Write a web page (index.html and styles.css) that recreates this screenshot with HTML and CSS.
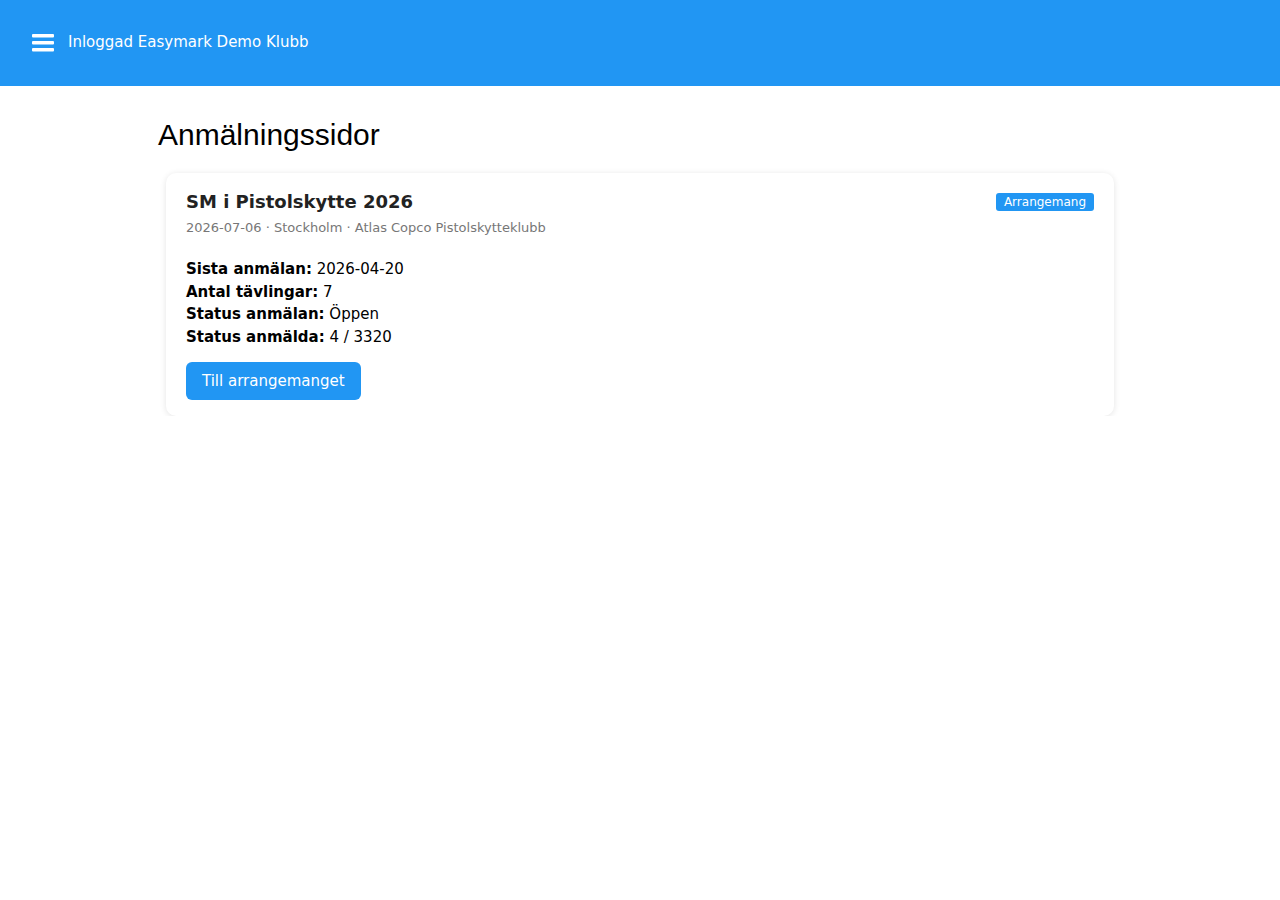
FILE: index.html
```html
<!DOCTYPE html>
<html lang="sv">
<head>
    <meta charset="UTF-8">
    <meta name="viewport" content="width=device-width, initial-scale=1.0">
    <title>Anmälningssidor</title>
    <link rel="stylesheet" href="styles.css">
</head>
<body>
    <header class="topbar">
        <button class="menu-btn" aria-label="Meny">
            <svg width="22" height="18" viewBox="0 0 22 18">
                <rect x="0" y="0" width="22" height="3.5" rx="1" fill="#fff"/>
                <rect x="0" y="7" width="22" height="3.5" rx="1" fill="#fff"/>
                <rect x="0" y="14" width="22" height="3.5" rx="1" fill="#fff"/>
            </svg>
        </button>
        <span class="user">Inloggad Easymark Demo Klubb</span>
    </header>

    <main class="container">
        <h1>Anmälningssidor</h1>

        <!-- Arrangemang -->
        <div class="card">
            <div class="card-head">
                <div>
                    <div class="card-title">SM i Pistolskytte 2026</div>
                    <div class="card-meta">2026-07-06 · Stockholm · Atlas Copco Pistolskytteklubb</div>
                </div>
                <span class="badge">Arrangemang</span>
            </div>
            <div class="card-info">
                <div><b>Sista anmälan:</b> 2026-04-20</div>
                <div><b>Antal tävlingar:</b> 7</div>
                <div><b>Status anmälan:</b> Öppen</div>
                <div><b>Status anmälda:</b> 4 / 3320</div>
            </div>
            <a class="btn" href="#">Till arrangemanget</a>
        </div>
    </main>
</body>
</html>
```

FILE: styles.css
```css
body {
    margin: 0;
    font-family: 'DejaVu Sans', Verdana, sans-serif;
    color: #000;
    background-color: #fff;
}

.topbar {
    height: 86px;
    background-color: #2196f3;
    display: flex;
    align-items: center;
    padding: 0 32px;
    box-sizing: border-box;
    color: #fff;
}

.menu-btn {
    background: none;
    border: none;
    padding: 0;
    margin-right: 14px;
    display: flex;
    cursor: pointer;
}

.user {
    font-size: 15px;
    margin-top: -3px;
}

.container {
    max-width: 964px;
    margin: 0 auto;
    padding: 0 8px;
}

h1 {
    font-family: 'Liberation Sans', Arial, sans-serif;
    font-weight: normal;
    font-size: 30px;
    margin: 32px 0 21px;
}

.card {
    margin: 0 8px;
    padding: 18px 20px 16px;
    border-radius: 10px;
    background-color: #fff;
    box-shadow: 0 1px 6px rgba(0, 0, 0, 0.11);
}

.card-head {
    display: flex;
    justify-content: space-between;
    align-items: flex-start;
}

.card-title {
    font-size: 18px;
    font-weight: bold;
    color: #222;
}

.card-meta {
    font-size: 13px;
    color: #777;
    margin-top: 8px;
}

.badge {
    background-color: #2196f3;
    color: #fff;
    font-size: 12px;
    line-height: 14px;
    padding: 2px 8px;
    border-radius: 3px;
    margin-top: 2px;
}

.card-info {
    margin-top: 23px;
    font-size: 15px;
    line-height: 22.5px;
}

.btn {
    display: inline-block;
    margin-top: 14px;
    background-color: #2196f3;
    color: #fff;
    text-decoration: none;
    font-size: 15px;
    line-height: 18px;
    padding: 10px 16px;
    border-radius: 6px;
}
```
